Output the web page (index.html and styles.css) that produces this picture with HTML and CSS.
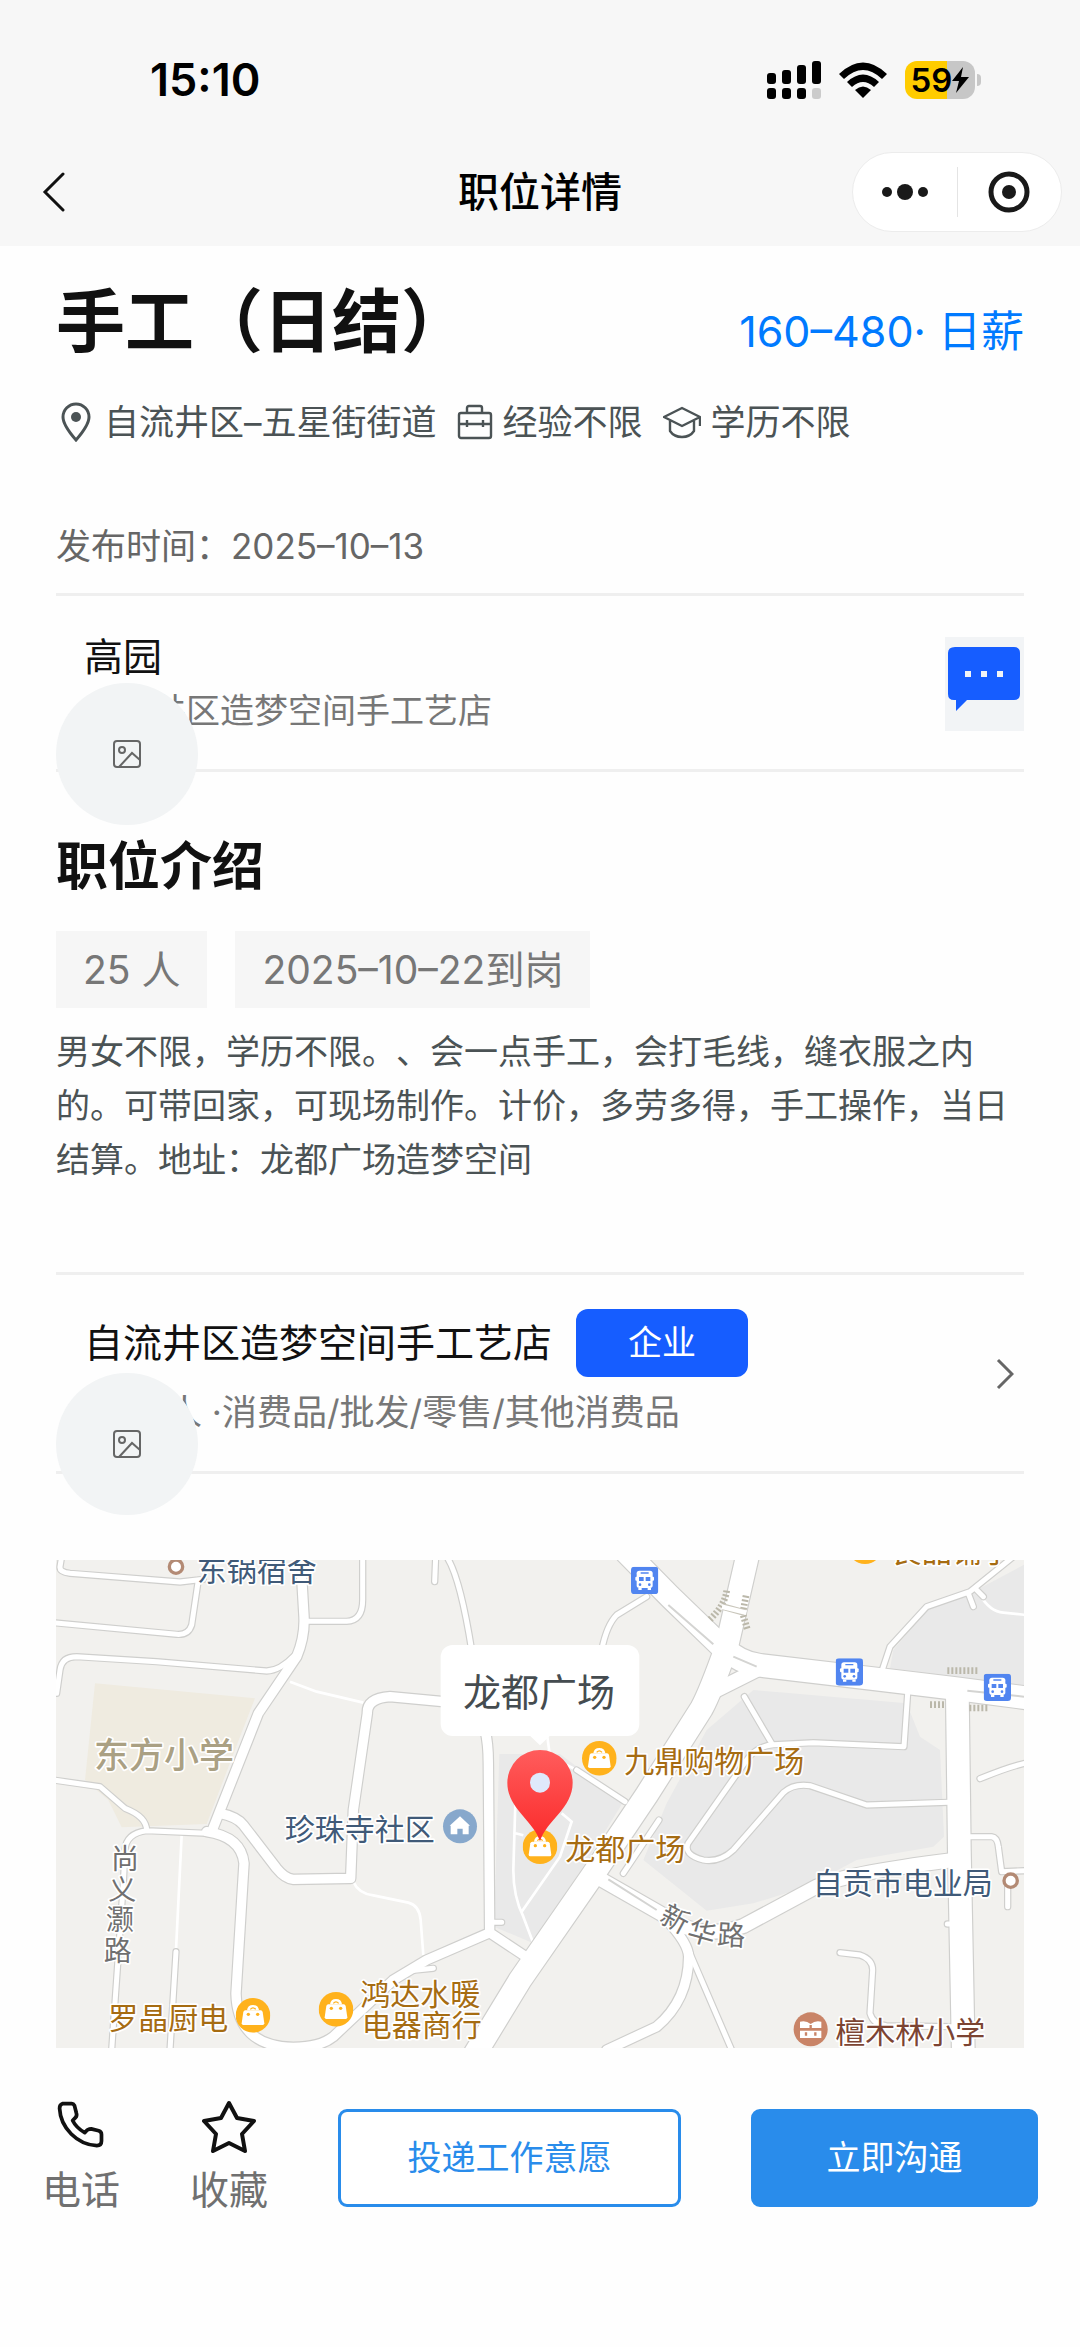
FILE: index.html
```html
<!DOCTYPE html>
<html lang="zh-CN">
<head>
  <meta charset="UTF-8">
  <meta name="viewport" content="width=device-width, initial-scale=1.0">
  <title>职位详情</title>
  <link rel="stylesheet" href="styles.css">
</head>
<body>

  <header class="top">
    <div class="status-bar">
      <span class="time">15:10</span>
      <div class="status-icons">
        <svg class="signal" viewBox="0 0 54 38" aria-hidden="true">
          <rect x="0" y="12" width="9" height="11" rx="3"/>
          <rect x="15" y="9" width="9" height="14" rx="3"/>
          <rect x="30" y="4" width="9" height="19" rx="3"/>
          <rect x="45" y="0" width="9" height="23" rx="3"/>
          <rect x="0" y="27" width="9" height="11" rx="3"/>
          <rect x="15" y="27" width="9" height="11" rx="3"/>
          <rect x="30" y="27" width="9" height="11" rx="3"/>
          <rect x="45" y="27" width="9" height="11" rx="3" fill="#cbcbcb"/>
        </svg>
        <svg class="wifi" viewBox="0 0 48 36" aria-hidden="true">
          <path d="M0 12Q24 -11 48 12L43 17Q24 -1 5 17Z"/>
          <path d="M8 20Q24 5 40 20L35 25Q24 15 13 25Z"/>
          <path d="M16 28Q24 21 32 28L24 36Z"/>
        </svg>
        <div class="battery">
          <span>59</span>
          <svg viewBox="0 0 17 26" aria-hidden="true"><path d="M11 0L0 14H7L4 26L17 10H9Z"/></svg>
        </div>
      </div>
    </div>
    <nav class="nav-bar">
      <button class="back" aria-label="返回">
        <svg viewBox="0 0 24 40"><path d="M21 2L3 20L21 38" fill="none" stroke="#111" stroke-width="3" stroke-linecap="round"/></svg>
      </button>
      <div class="nav-title">职位详情</div>
      <div class="capsule">
        <button aria-label="更多">
          <svg width="46" height="18" viewBox="0 0 46 18"><circle cx="5" cy="9" r="5"/><circle cx="23" cy="9" r="8"/><circle cx="41" cy="9" r="5"/></svg>
        </button>
        <button aria-label="关闭">
          <svg width="42" height="42" viewBox="0 0 42 42"><circle cx="21" cy="21" r="18" fill="none" stroke="#191919" stroke-width="5"/><circle cx="21" cy="21" r="7"/></svg>
        </button>
      </div>
    </nav>
  </header>

  <main class="content">
    <section class="job-head">
      <div class="title-row">
        <h1>手工（日结）</h1>
        <span class="salary">160–480· 日薪</span>
      </div>
      <div class="meta">
        <span class="meta-item">
          <svg class="pin-icon" viewBox="0 0 38 42"><path d="M20 39C13 31 7 23 7 16A13 13 0 0 1 33 16C33 23 27 31 20 39Z" fill="none" stroke="currentColor" stroke-width="3"/><circle cx="20" cy="16" r="5" fill="currentColor"/></svg>
          自流井区–五星街街道
        </span>
        <span class="meta-item">
          <svg class="case-icon" viewBox="0 0 36 36"><g fill="none" stroke="currentColor" stroke-width="2.4"><rect x="2" y="9" width="32" height="25" rx="2"/><path d="M10 9V4Q10 2 12 2H23Q25 2 25 4V9M2 20H34M10 16V23M26 16V23"/></g></svg>
          经验不限
        </span>
        <span class="meta-item">
          <svg class="cap-icon" viewBox="0 0 38 36"><path d="M19 4L37 13L19 22L1 13ZM7 17V27Q11 33 19 33Q27 33 31 27V17M37 13V22" fill="none" stroke="currentColor" stroke-width="2.4" stroke-linejoin="round"/></svg>
          学历不限
        </span>
      </div>
      <p class="publish">发布时间：2025–10–13</p>
    </section>

    <section class="contact">
      <div class="contact-text">
        <p class="name">高园</p>
        <p class="sub">自流井区造梦空间手工艺店</p>
      </div>
      <button class="chat" aria-label="聊天">
        <svg viewBox="0 0 79 94"><path d="M10 10H69Q75 10 75 16V57Q75 63 69 63H22L11 74V63H9Q3 63 3 57V16Q3 10 10 10Z" fill="#165dff"/><g fill="#f2f4f6"><rect x="20" y="34" width="6" height="6"/><rect x="36" y="34" width="6" height="6"/><rect x="52" y="34" width="6" height="6"/></g></svg>
      </button>
      <div class="avatar">
        <svg viewBox="0 0 28 28"><g fill="none" stroke="#666" stroke-width="2"><rect x="1" y="1" width="26" height="26" rx="3"/><circle cx="9" cy="10" r="3"/><path d="M6 27L19 13L27 20"/></g></svg>
      </div>
    </section>

    <section class="intro">
      <h2>职位介绍</h2>
      <div class="tags">
        <span class="tag">25 人</span>
        <span class="tag">2025–10–22到岗</span>
      </div>
      <p class="description">男女不限，学历不限。、会一点手工，会打毛线，缝衣服之内的。可带回家，可现场制作。计价，多劳多得，手工操作，当日结算。地址：龙都广场造梦空间</p>
    </section>

    <section class="company">
      <div class="company-text">
        <div class="company-row">
          <span class="name">自流井区造梦空间手工艺店</span>
          <span class="badge">企业</span>
        </div>
        <p class="sub">0–20人 ·消费品/批发/零售/其他消费品</p>
      </div>
      <svg class="arrow" viewBox="0 0 18 32"><path d="M2 2L16 16L2 30" fill="none" stroke="#666" stroke-width="3"/></svg>
      <div class="avatar">
        <svg viewBox="0 0 28 28"><g fill="none" stroke="#666" stroke-width="2"><rect x="1" y="1" width="26" height="26" rx="3"/><circle cx="9" cy="10" r="3"/><path d="M6 27L19 13L27 20"/></g></svg>
      </div>
    </section>

    <svg class="map" viewBox="48 30 2904 1464" role="img" aria-label="龙都广场地图">
      <defs>
        <linearGradient id="pin-red" x1="0" y1="0" x2="0" y2="1">
          <stop offset="0" stop-color="#ff5c5c"/>
          <stop offset="1" stop-color="#fb2b2b"/>
        </linearGradient>
        <symbol id="shop" viewBox="-52 -52 104 104">
          <circle r="52" fill="#ffb21c"/>
          <path d="M-23 -15H23Q28 -15 29 -10L34 24Q34 29 29 29H-29Q-34 29 -34 24L-29 -10Q-28 -15 -23 -15Z" fill="#fff"/>
          <path d="M-18 -15Q-16 -31 0 -31Q16 -31 18 -15Z" fill="#fff"/>
          <path d="M-8 -18Q0 -27 8 -18" fill="none" stroke="#ffb21c" stroke-width="4"/>
          <circle cx="-14" cy="-3" r="5" fill="#ffb21c"/>
          <circle cx="14" cy="-3" r="5" fill="#ffb21c"/>
        </symbol>
        <symbol id="bus" viewBox="0 0 82 82">
          <rect width="82" height="82" rx="10" fill="#5185f0"/>
          <rect x="17" y="12" width="48" height="52" rx="8" fill="#fff"/>
          <rect x="13" y="30" width="56" height="12" rx="3" fill="#fff"/>
          <path d="M22 64H32V70H22ZM50 64H60V70H50Z" fill="#fff"/>
          <path d="M29 19H53" stroke="#5185f0" stroke-width="4"/>
          <path d="M24 31H38V43H24ZM44 31H58V43H44Z" fill="#5185f0"/>
          <circle cx="27" cy="54" r="4" fill="#5185f0"/>
          <circle cx="55" cy="54" r="4" fill="#5185f0"/>
        </symbol>
        <g id="roads">
          <path class="w-s" d="M65 20L60 50Q58 66 90 70L420 96L490 88M475 90L455 225Q445 256 410 253L40 218M805 214H920Q968 212 968 150V20M50 430L60 360Q65 320 110 320L350 335L680 363Q720 362 765 315M1220 20Q1260 80 1295 300M1187 20L1184 95M40 690L180 710L255 775Q320 800 320 842L500 850M320 842Q258 850 255 900L250 1000L215 1500M408 1205L390 1500M1350 1117H1385M1110 1262L1180 1255"/>
          <path class="w-s" d="M1755 755L1610 660M1750 970L1857 810M1820 140L1730 195Q1700 225 1685 300M2113 440L2195 580M2603 430L2592 590L2320 578L2200 584Q2150 588 2120 630L1944 880Q1930 915 1990 930Q2040 938 2080 900L2230 728Q2260 700 2310 707L2480 765L2725 757M2525 365L2550 290L2660 170L2790 125L2920 20M2785 130L2800 170M2810 120L2830 140M2970 637Q2920 645 2820 686M2780 860H2855Q2872 862 2875 890L2885 965L2960 962M2903 1070V1010M2400 1208L2460 1215Q2498 1228 2498 1260L2490 1390Q2500 1425 2540 1427L2740 1430M1950 1210L2075 1500M2722 1122H2740"/>
          <path class="w-m" d="M785 80L792 200Q795 260 770 320L655 490L515 845M1210 455L1050 440Q980 445 982 490L940 780L932 985L760 988Q735 986 710 955L610 825Q590 800 540 790M1335 540Q1345 580 1345 640L1349 1148L1480 1235M1349 1148L1160 1230L1060 1290L880 1460Q840 1492 760 1492Q592 1490 588 1330L612 940Q604 860 500 845M1880 1110Q1945 1180 1946 1220Q1945 1350 1850 1430L1700 1500"/>
          <path class="w-l" d="M2020 425L2150 360M1660 975L1870 1095Q1980 1175 2110 1128L2320 1015Q2400 972 2740 930"/>
          <path class="w-xl" d="M1762 10L1890 140L2040 285Q2100 340 2160 346L2490 385L2740 415L2970 445"/>
          <path class="w-xl" d="M2122 20L2060 290Q2010 430 1985 475L1820 735L1655 980L1440 1290L1300 1520M2752 430L2758 900L2770 1510"/>
        </g>
      </defs>

      <rect x="48" y="30" width="2904" height="1464" fill="#f2f1ee"/>
      <path d="M165 400L645 445L600 560L500 822L245 832L205 750L135 690Z" fill="#efebe0"/>
      <g fill="#e9e9e9">
        <path d="M1378 612H1560L1750 755L1630 950L1480 1180L1362 1130Z"/>
        <path d="M2140 420L2600 460L2640 560L2700 600L2712 860L2680 890L2450 930L2300 1010L2140 1060L2000 1082L1810 930L1880 760L2000 540Z"/>
        <path d="M2960 40L2810 120L2660 180L2560 300L2550 355L2960 410Z"/>
      </g>
      <path class="lane" d="M750 395L830 425L970 458M425 855L408 1200M940 995Q955 1030 1000 1036L1105 1058Q1138 1066 1142 1110L1150 1215M1426 760L1420 960Q1420 1040 1450 1100L1480 1180M1420 848L1450 856M1565 790L1595 815L1560 920L1445 1085M1522 560L1530 620L1610 660M2820 135Q2850 185 2890 188L2960 195"/>

      <g class="roads casing"><use href="#roads"/></g>
      <g class="roads"><use href="#roads"/></g>

      <path class="median" d="M1885 165L2020 283M2080 320L2150 350M2782 422L2952 440M1705 988L1850 1080"/>
      <path class="stairs" d="M2060 122Q2055 165 2010 208M2118 137L2108 190L2122 238M2722 362H2814M2670 464H2718M2788 474H2846"/>
      <path d="M2050 170L2115 188" fill="none" stroke="#c9c6bb" stroke-width="20"/>
      <path d="M2046 170L2119 188" fill="none" stroke="#fff" stroke-width="14"/>

      <use href="#bus" x="1773" y="50" width="82" height="82"/>
      <use href="#bus" x="2387" y="325" width="82" height="82"/>
      <use href="#bus" x="2831" y="371" width="82" height="82"/>
      <use href="#shop" x="2423" y="-62" width="104" height="104"/>
      <use href="#shop" x="587" y="1344" width="104" height="104"/>
      <use href="#shop" x="836" y="1326" width="104" height="104"/>
      <use href="#shop" x="1626" y="573" width="104" height="104"/>
      <use href="#shop" x="1448" y="838" width="104" height="104"/>
      <circle cx="1260" cy="829" r="51" fill="#87a8cc"/>
      <path d="M1260 799L1290 827H1286V853H1268V836H1252V853H1232V827H1229Z" fill="#fff"/>
      <circle cx="2312" cy="1438" r="51" fill="#c98467"/>
      <path d="M2280 1415Q2298 1410 2312 1422Q2326 1410 2344 1415V1434H2280ZM2280 1442H2344V1464H2280Z" fill="#fff"/>
      <path d="M2298 1447V1457M2326 1447V1457M2312 1425V1434" stroke="#c98467" stroke-width="7"/>
      <g fill="#fff" stroke="#b38a74" stroke-width="10">
        <circle cx="408" cy="50" r="20"/>
        <circle cx="2912" cy="992" r="20"/>
      </g>

      <g class="label place">
        <text x="470" y="93">东锅宿舍</text>
        <text x="734" y="871">珍珠寺社区</text>
        <text x="2318" y="1033">自贡市电业局</text>
      </g>
      <g class="label shop">
        <text x="2555" y="35">良品铺子</text>
        <text x="205" y="1438">罗晶厨电</text>
        <text x="961" y="1365">鸿达水暖</text>
        <text x="965" y="1457">电器商行</text>
        <text x="1753" y="666">九鼎购物广场</text>
        <text x="1576" y="931">龙都广场</text>
      </g>
      <text class="label school" x="2386" y="1480">檀木林小学</text>
      <text class="label campus" x="162" y="653">东方小学</text>
      <g class="label street">
        <text x="255" y="957">尚</text>
        <text x="247" y="1050">义</text>
        <text x="240" y="1140">灏</text>
        <text x="233" y="1233">路</text>
        <text x="1905" y="1137" transform="rotate(28 1905 1107)">新</text>
        <text x="1986" y="1178" transform="rotate(16 1986 1148)">华</text>
        <text x="2074" y="1186" transform="rotate(3 2074 1156)">路</text>
      </g>

      <path d="M1500 874C1480 810 1402 775 1402 698A98 98 0 0 1 1598 698C1598 775 1520 810 1500 874Z" fill="url(#pin-red)"/>
      <circle cx="1500" cy="698" r="30" fill="#dfe9fb"/>
      <rect x="1202" y="285" width="596" height="273" rx="36" fill="#fff"/>
      <path d="M1470 557L1500 586L1530 557Z" fill="#fff"/>
      <text class="callout" x="1497" y="467">龙都广场</text>
    </svg>
  </main>

  <footer class="action-bar">
    <button class="icon-btn">
      <svg viewBox="-1 0 58 58"><path d="M8 4H18Q20 4 21 6L23 14Q24 17 22 19L19 22Q23 30 32 35L35 32Q37 31 39 31L47 33Q50 34 50 37V44Q50 49 45 49C24 48 6 30 5 9Q5 5 8 4Z" fill="none" stroke="#111" stroke-width="4" stroke-linejoin="round"/></svg>
      电话
    </button>
    <button class="icon-btn">
      <svg viewBox="0 0 54 54"><path d="M27 3L35 18L52 21L40 34L43 51L27 43L11 51L14 34L2 21L19 18Z" fill="none" stroke="#111" stroke-width="4" stroke-linejoin="round"/></svg>
      收藏
    </button>
    <button class="btn btn-outline">投递工作意愿</button>
    <button class="btn btn-primary">立即沟通</button>
  </footer>

</body>
</html>
```

FILE: styles.css
```css
* {
  box-sizing: border-box;
}

body {
  font-family: Inter, "Noto Sans CJK SC", sans-serif;
  text-spacing-trim: space-all;
  background-color: #fefefe;
  color: #111;
  margin: 0;
  padding: 0;
  min-height: 100vh;
}

h1, h2, p {
  margin: 0;
}

svg {
  display: block;
}

button {
  font-family: inherit;
  background: none;
  border: none;
  padding: 0;
  cursor: pointer;
}

/* status bar + navigation */
.top {
  background-color: #f7f7f7;
}

.status-bar {
  display: flex;
  align-items: center;
  justify-content: space-between;
  padding: 54px 99px 0 150px;
}

.time {
  font-size: 45px;
  font-weight: 600;
  line-height: 52px;
  color: #000;
}

.status-icons {
  display: flex;
  align-items: center;
  gap: 18px;
}

.signal {
  width: 54px;
  height: 38px;
}

.wifi {
  width: 48px;
  height: 36px;
}

.battery {
  position: relative;
  display: flex;
  align-items: center;
  justify-content: center;
  width: 70px;
  height: 38px;
  margin-right: 6px;
  border-radius: 12px;
  background: linear-gradient(90deg, #ffcc00 60%, #c7c7c7 60%);
  font-size: 33px;
  font-weight: 600;
  color: #000;
}

.battery::after {
  content: "";
  position: absolute;
  right: -6px;
  width: 4px;
  height: 12px;
  border-radius: 0 4px 4px 0;
  background-color: #c7c7c7;
}

.battery svg {
  width: 17px;
  height: 26px;
}

.nav-bar {
  display: grid;
  grid-template-columns: 1fr auto 1fr;
  align-items: center;
  padding: 46px 18px 14px;
}

.back {
  justify-self: start;
  padding: 0 24px;
}

.back svg {
  width: 24px;
  height: 40px;
}

.nav-title {
  font-size: 41px;
  font-weight: 500;
  line-height: 60px;
  color: #000;
}

.capsule {
  justify-self: end;
  display: flex;
  width: 210px;
  height: 80px;
  padding: 14px 0;
  border: 1px solid #ececec;
  border-radius: 40px;
  background-color: #fff;
}

.capsule button {
  flex: 1;
  display: flex;
  align-items: center;
  justify-content: center;
}

.capsule button + button {
  border-left: 1px solid #e4e4e4;
}

.capsule svg {
  fill: #191919;
}

/* job detail */
.content {
  padding: 36px 56px 0;
}

.job-head,
.contact,
.intro,
.company {
  border-bottom: 3px solid #efefef;
}

.job-head {
  padding-bottom: 23px;
}

.title-row {
  display: flex;
  align-items: baseline;
  justify-content: space-between;
}

h1 {
  font-size: 69px;
  font-weight: 700;
  line-height: 80px;
}

.salary {
  font-size: 43px;
  color: #007aff;
}

.meta {
  display: flex;
  gap: 20px;
  margin-top: 36px;
}

.meta-item {
  display: flex;
  align-items: center;
  gap: 10px;
  font-size: 35px;
  line-height: 48px;
  color: #4b5355;
}

.pin-icon {
  width: 38px;
  height: 42px;
}

.case-icon {
  width: 36px;
  height: 36px;
}

.cap-icon {
  width: 38px;
  height: 36px;
}

.publish {
  margin-top: 76px;
  font-size: 35px;
  line-height: 48px;
  color: #666;
}

.contact,
.company {
  position: relative;
  display: flex;
  align-items: center;
  justify-content: space-between;
  padding: 34px 0 31px 28px;
}

.name {
  font-size: 39px;
  line-height: 54px;
}

.sub {
  font-size: 34px;
  line-height: 54px;
  color: #777;
}

.chat {
  background-color: #f2f4f6;
}

.chat svg {
  width: 79px;
  height: 94px;
}

.avatar {
  position: absolute;
  top: 87px;
  left: 0;
  display: flex;
  align-items: center;
  justify-content: center;
  width: 142px;
  height: 142px;
  border-radius: 50%;
  background-color: #f2f4f5;
}

.avatar svg {
  width: 28px;
  height: 28px;
}

.intro {
  padding: 62px 0 85px;
}

h2 {
  font-size: 52px;
  font-weight: 700;
  line-height: 66px;
}

.tags {
  display: flex;
  gap: 28px;
  margin-top: 31px;
}

.tag {
  padding: 12px 27px;
  background-color: #f6f6f6;
  font-size: 39px;
  line-height: 53px;
  color: #777;
}

.description {
  margin-top: 17px;
  font-size: 34px;
  line-height: 54px;
  color: #4b5355;
}

.company {
  padding: 34px 10px 32px 28px;
}

.company .sub {
  font-size: 35px;
}

.company .avatar {
  top: 98px;
}

.company-row {
  display: flex;
  align-items: center;
  gap: 24px;
  margin-bottom: 8px;
}

.badge {
  padding: 0 52px;
  border-radius: 12px;
  background-color: #165dff;
  font-size: 34px;
  line-height: 68px;
  color: #fff;
}

.arrow {
  width: 18px;
  height: 32px;
}

/* map */
.map {
  width: 100%;
  height: auto;
  margin-top: 86px;
}

.roads {
  --edge: 0px;
  fill: none;
  stroke: #fff;
  stroke-linecap: round;
  stroke-linejoin: round;
}

.casing {
  --edge: 7px;
  stroke: #cfcfcd;
}

.w-s { stroke-width: calc(15px + var(--edge)); }
.w-m { stroke-width: calc(28px + var(--edge)); }
.w-l { stroke-width: calc(42px + var(--edge)); }
.w-xl { stroke-width: calc(68px + var(--edge)); }

.lane {
  fill: none;
  stroke: #fff;
  stroke-width: 8px;
}

.median {
  fill: none;
  stroke: #d4d4d2;
  stroke-width: 6px;
}

.stairs {
  fill: none;
  stroke: #bbb8aa;
  stroke-width: 20px;
  stroke-dasharray: 6 6;
}

.label {
  font-size: 90px;
  stroke: #fff;
  stroke-width: 10px;
  stroke-linejoin: round;
  paint-order: stroke;
}

.place { fill: #405a78; }
.shop { fill: #a66c12; }
.school { fill: #7c4433; }

.campus {
  font-size: 105px;
  font-weight: 500;
  fill: #aaa083;
}

.street {
  font-size: 84px;
  text-anchor: middle;
  fill: #707070;
}

.callout {
  font-size: 114px;
  text-anchor: middle;
  fill: #454c50;
}

/* bottom actions */
.action-bar {
  display: flex;
  align-items: center;
  gap: 70px;
  padding: 52px 42px 120px;
}

.icon-btn {
  display: flex;
  flex-direction: column;
  align-items: center;
  gap: 10px;
  font-size: 39px;
  line-height: 52px;
  color: #707070;
}

.icon-btn svg {
  width: 54px;
  height: 54px;
}

.btn {
  height: 98px;
  padding-bottom: 6px;
  border: 3px solid #298ceb;
  border-radius: 9px;
  font-size: 34px;
}

.btn-outline {
  flex: 6;
  background-color: #fff;
  color: #298ceb;
}

.btn-primary {
  flex: 5;
  background-color: #298ceb;
  color: #fff;
}
```
